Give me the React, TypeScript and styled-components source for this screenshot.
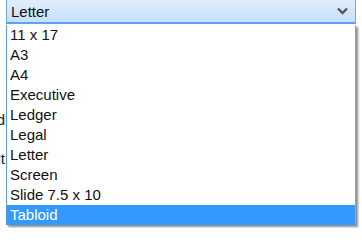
import React from "react";
import styled, { createGlobalStyle } from "styled-components";

const GlobalStyle = createGlobalStyle`
  html, body {
    margin: 0;
    padding: 0;
    background: #ffffff;
  }
  body {
    font-family: "Liberation Sans", Arial, sans-serif;
  }
`;

const Page = styled.div`
  position: relative;
  width: 362px;
  height: 228px;
  overflow: hidden;
  background: #ffffff;
`;

// form labels behind the open list, only their last letters peek out
const LabelColumn = styled.div`
  display: flex;
  flex-direction: column;
  width: 5px;
  padding-top: 111px;
  gap: 21px;
`;

const Label = styled.div`
  display: flex;
  justify-content: flex-end;
  white-space: nowrap;
  font-size: 15px;
  line-height: 18px;
  color: #1a1a1a;
`;

const Dropdown = styled.div`
  position: absolute;
  left: 6px;
  top: 0;
  width: 350px;
  display: flex;
  flex-direction: column;
`;

const Header = styled.div`
  display: flex;
  align-items: center;
  justify-content: space-between;
  height: 24px;
  box-sizing: border-box;
  padding: 0 7px 0 4px;
  border-left: 1px solid #6aaae8;
  border-right: 1px solid #6aaae8;
  border-bottom: 2px solid #5ba3ea;
  background: linear-gradient(to bottom, #e0eefc 0%, #c6e0f8 100%);
  font-size: 15px;
  color: #111111;
`;

const List = styled.ul`
  list-style: none;
  margin: 0;
  padding: 0;
  margin-top: 1px;
  border-left: 1px solid #5b9be0;
  border-right: 1px solid #8aa6c4;
  background: #ffffff;
  box-shadow: 2px 2px 2px rgba(0, 0, 0, 0.45);
`;

const Item = styled.li<{ $selected?: boolean }>`
  height: 20px;
  line-height: 20px;
  padding-left: 3px;
  font-size: 15px;
  color: ${({ $selected }) => ($selected ? "#ffffff" : "#111111")};
  background: ${({ $selected }) => ($selected ? "#3399ff" : "transparent")};
  white-space: nowrap;
`;

const Chevron = () => (
  <svg width="11" height="8" viewBox="0 0 11 8">
    <path d="M1 1.5 L5.5 6 L10 1.5" fill="none" stroke="#555555" strokeWidth="2.4" />
  </svg>
);

const sizes = [
  "11 x 17",
  "A3",
  "A4",
  "Executive",
  "Ledger",
  "Legal",
  "Letter",
  "Screen",
  "Slide 7.5 x 10",
  "Tabloid",
];

export default function App() {
  return (
    <>
      <GlobalStyle />
      <Page>
        <LabelColumn>
          <Label>Field</Label>
          <Label>Layout</Label>
        </LabelColumn>
        <Dropdown>
          <Header>
            <span>Letter</span>
            <Chevron />
          </Header>
          <List>
            {sizes.map((s) => (
              <Item key={s} $selected={s === "Tabloid"}>
                {s}
              </Item>
            ))}
          </List>
        </Dropdown>
      </Page>
    </>
  );
}
